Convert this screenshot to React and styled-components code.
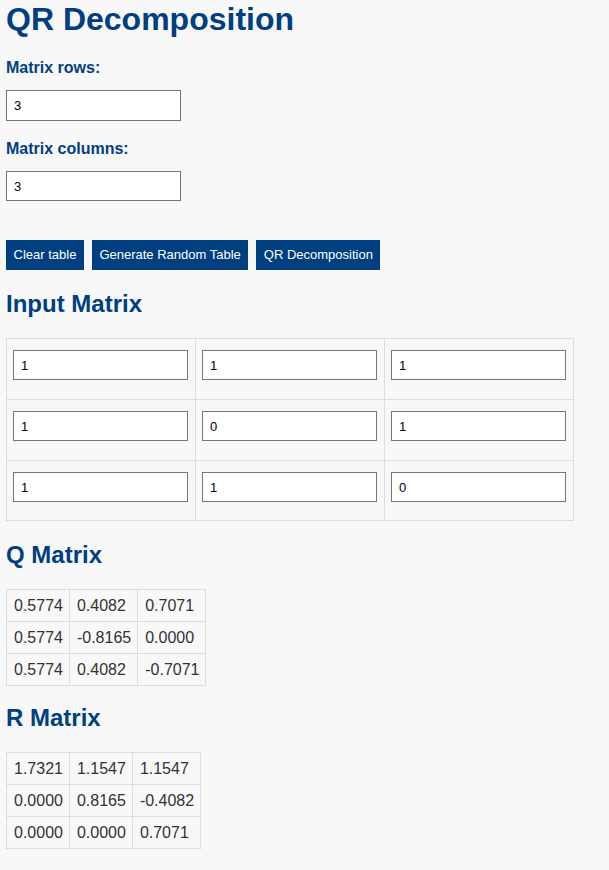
import React from "react";
import styled, { createGlobalStyle } from "styled-components";

const Global = createGlobalStyle`
  html, body { margin: 0; padding: 0; background: #f8f8f8; }
  body { font-family: "Liberation Sans", Arial, sans-serif; color: #333; }
`;

const Page = styled.div`
  padding: 1px 6px 20px 6px;
`;

const Title = styled.h1`
  margin: 0 0 21px 0;
  font-size: 32px;
  line-height: 37px;
  font-weight: bold;
  color: #004080;
`;

const Label = styled.label`
  display: block;
  font-size: 16px;
  line-height: 18px;
  font-weight: bold;
  color: #004080;
  margin: ${(p) => p.$top || 0}px 0 13px 0;
`;

const TextInput = styled.input`
  box-sizing: border-box;
  display: block;
  width: 175px;
  height: ${(p) => p.$h || 30}px;
  border: 1px solid #767676;
  background: #fff;
  padding: 0 7px;
  font-family: "Liberation Sans", Arial, sans-serif;
  font-size: 13px;
  color: #000;
  outline: none;
`;

const Toolbar = styled.div`
  display: flex;
  gap: 8px;
  margin-top: 39px;
`;

const Button = styled.button`
  box-sizing: border-box;
  height: 30px;
  background: #004080;
  color: #fff;
  border: none;
  font-family: "Liberation Sans", Arial, sans-serif;
  font-size: 13px;
  line-height: 16px;
  padding: 7px 7.5px;
  cursor: pointer;
`;

const Heading = styled.h2`
  margin: ${(p) => p.$top ?? 20}px 0 20px 0;
  font-size: 24px;
  line-height: 28px;
  font-weight: bold;
  color: #004080;
`;

const Table = styled.table`
  border-collapse: collapse;
`;

const InputCell = styled.td`
  border: 1px solid #ddd;
  height: ${(p) => p.$h || 61}px;
  box-sizing: border-box;
  padding: 11px 7px 18px 6px;
  vertical-align: top;
`;

const ValueCell = styled.td`
  border: 1px solid #ddd;
  padding: 6px 6px 6px 7px;
  font-size: 16px;
  line-height: 19px;
  color: #333;
`;

const input = [
  ["1", "1", "1"],
  ["1", "0", "1"],
  ["1", "1", "0"],
];
const q = [
  ["0.5774", "0.4082", "0.7071"],
  ["0.5774", "-0.8165", "0.0000"],
  ["0.5774", "0.4082", "-0.7071"],
];
const r = [
  ["1.7321", "1.1547", "1.1547"],
  ["0.0000", "0.8165", "-0.4082"],
  ["0.0000", "0.0000", "0.7071"],
];

const ValueTable = ({ data }) => (
  <Table>
    <tbody>
      {data.map((row, i) => (
        <tr key={i}>
          {row.map((v, j) => (
            <ValueCell key={j}>{v}</ValueCell>
          ))}
        </tr>
      ))}
    </tbody>
  </Table>
);

export default function App() {
  return (
    <Page>
      <Global />
      <Title>QR Decomposition</Title>
      <Label htmlFor="rows">Matrix rows:</Label>
      <TextInput id="rows" $h={31} defaultValue="3" />
      <Label htmlFor="cols" $top={19}>Matrix columns:</Label>
      <TextInput id="cols" defaultValue="3" />
      <Toolbar>
        <Button>Clear table</Button>
        <Button>Generate Random Table</Button>
        <Button>QR Decomposition</Button>
      </Toolbar>
      <Heading>Input Matrix</Heading>
      <Table>
        <tbody>
          {input.map((row, i) => (
            <tr key={i}>
              {row.map((v, j) => (
                <InputCell key={j} $h={i === 2 ? 60 : 61}>
                  <TextInput defaultValue={v} />
                </InputCell>
              ))}
            </tr>
          ))}
        </tbody>
      </Table>
      <Heading $top={20}>Q Matrix</Heading>
      <ValueTable data={q} />
      <Heading $top={18}>R Matrix</Heading>
      <ValueTable data={r} />
    </Page>
  );
}
